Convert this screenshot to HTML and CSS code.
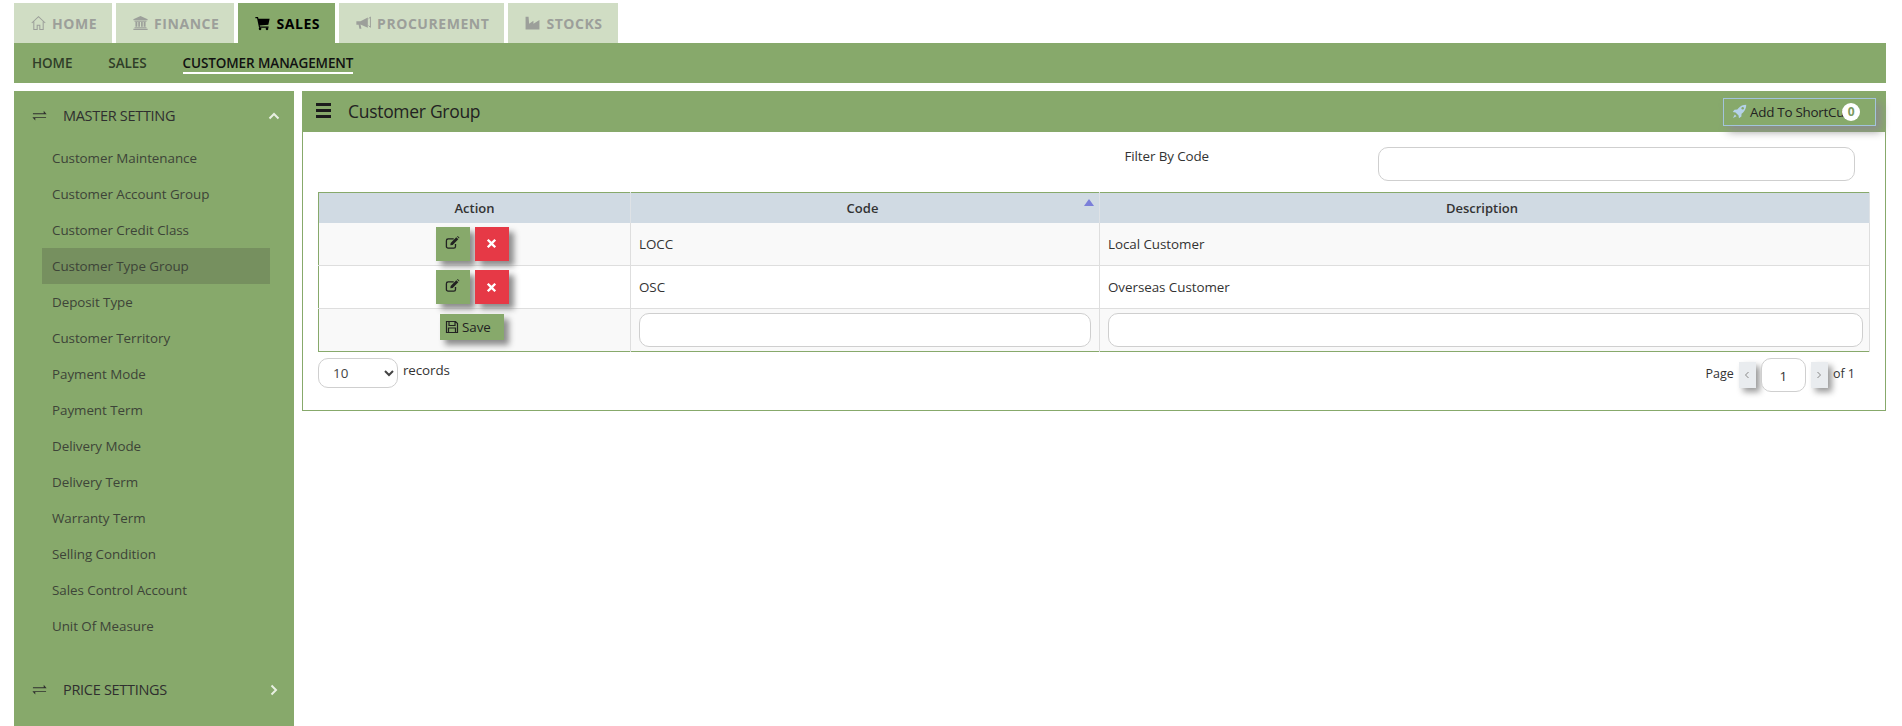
FILE: index.html
```html
<!DOCTYPE html>
<html lang="en">
<head>
<meta charset="utf-8">
<title>Customer Group</title>
<link rel="stylesheet" href="styles.css">
</head>
<body>
<svg class="defs" width="0" height="0" aria-hidden="true">
  <symbol id="ex" viewBox="0 0 16 14"><path d="M1 4h11.500V1.400L15.600 5H1zM15 9.200H3.500v2.600L.4 8.400H15z" fill="currentColor"/></symbol>
  <symbol id="edit" viewBox="0 0 16 16"><path d="M11.200 9.600v2.600a1.800 1.800 0 0 1-1.800 1.800H3.300a1.800 1.800 0 0 1-1.800-1.800V6a1.800 1.800 0 0 1 1.800-1.800h6" fill="none" stroke="currentColor" stroke-width="1.400"/><path d="M6 8.400 12 2.400 14.200 4.600 8.200 10.600 5.700 11zM12.800 1.600 13.600 1 15.400 2.800 14.900 3.700z" fill="currentColor"/></symbol>
  <symbol id="x" viewBox="0 0 12 12"><path d="M2.800 1 6 4.200 9.200 1 11 2.800 7.800 6 11 9.200 9.200 11 6 7.800 2.800 11 1 9.200 4.200 6 1 2.800z" fill="currentColor"/></symbol>
</svg>

<nav class="tabs">
  <a class="tab">
    <svg class="tab-ico" viewBox="0 0 16 16"><path d="M.8 8 8 1.200 15.200 8M3 6.400V15h3.600v-4.600h2.800V15H13V6.400" fill="none" stroke="currentColor" stroke-width="1.100"/></svg>HOME</a>
  <a class="tab">
    <svg class="tab-ico" viewBox="0 0 16 16"><path d="M8 .6 15.600 4v1H.4V4zM1.600 5.600h12.800v1H1.600zM2.600 7h2v5h-2zM5.600 7h1.800v5H5.600zM8.600 7h1.800v5H8.600zM11.400 7h2v5h-2zM1.600 12.400h12.800v1.200H1.600zM.4 14h15.200v1.400H.4z" fill="currentColor"/></svg>FINANCE</a>
  <a class="tab tab-active">
    <svg class="tab-ico" viewBox="0 0 16 16"><path d="M.4 1.600h2.800l.5 1.800H15.600l-1.400 6.400-9.200.8.300 1.200h9.200v1.300H4.300L2.200 2.900H.4z" fill="currentColor"/><circle cx="5.400" cy="14.200" r="1.400" fill="currentColor"/><circle cx="12.800" cy="14.200" r="1.400" fill="currentColor"/></svg>SALES</a>
  <a class="tab">
    <svg class="tab-ico" viewBox="0 0 16 16"><path d="M.4 6.200h4.400L12.600 2v11L4.800 9.600l1 4.400H3.600L2.800 9.800H.4z" fill="currentColor"/><path d="M13.400 3.400 15.400 1.600v11l-2-1.800" fill="none" stroke="currentColor" stroke-width="1"/></svg>PROCUREMENT</a>
  <a class="tab">
    <svg class="tab-ico" viewBox="0 0 16 16"><path d="M.6 1.400h3.200l.6 7.400L9 5.600v3.200l6.400-4V15H.6z" fill="currentColor"/></svg>STOCKS</a>
</nav>

<nav class="subnav">
  <a class="sub">HOME</a>
  <a class="sub">SALES</a>
  <a class="sub sub-active">CUSTOMER MANAGEMENT</a>
</nav>

<div class="content">
  <aside class="sidebar">
    <div class="side-head">
      <svg class="side-ico"><use href="#ex"/></svg><span class="side-title">MASTER SETTING</span>
      <svg class="chev" viewBox="0 0 12 12"><path d="M1.500 8.500 6 4l4.500 4.500" fill="none" stroke="currentColor" stroke-width="2"/></svg>
    </div>
    <ul class="side-list">
      <li class="side-item">Customer Maintenance</li>
      <li class="side-item">Customer Account Group</li>
      <li class="side-item">Customer Credit Class</li>
      <li class="side-item side-item-active">Customer Type Group</li>
      <li class="side-item">Deposit Type</li>
      <li class="side-item">Customer Territory</li>
      <li class="side-item">Payment Mode</li>
      <li class="side-item">Payment Term</li>
      <li class="side-item">Delivery Mode</li>
      <li class="side-item">Delivery Term</li>
      <li class="side-item">Warranty Term</li>
      <li class="side-item">Selling Condition</li>
      <li class="side-item">Sales Control Account</li>
      <li class="side-item">Unit Of Measure</li>
    </ul>
    <div class="side-head">
      <svg class="side-ico"><use href="#ex"/></svg><span class="side-title">PRICE SETTINGS</span>
      <svg class="chev" viewBox="0 0 12 12"><path d="M3.500 1.500 8 6l-4.500 4.500" fill="none" stroke="currentColor" stroke-width="2"/></svg>
    </div>
  </aside>

  <main class="panel">
    <header class="panel-head">
      <span class="bars"><i></i><i></i><i></i></span>
      <h1 class="panel-title">Customer Group</h1>
      <button class="shortcut">
        <svg class="rocket" viewBox="0 0 16 16"><path d="M15.200.8C11.800.8 9 2 6.800 4.400L5.600 5.800 2.600 6 .8 8.600l3 .4L7 12.200l.4 3 2.600-1.800.2-3 1.400-1.200C14 7 15.200 4.200 15.200.8z" fill="currentColor"/><circle cx="11.400" cy="4.600" r="1.300" fill="#87a96b"/><path d="M3 11.200 1 15l3.800-2z" fill="currentColor"/></svg>
        Add To ShortCut
        <span class="badge">0</span>
      </button>
    </header>
    <div class="panel-body">
      <div class="filter">
        <label class="filter-label">Filter By Code</label>
        <input class="field filter-input" type="text">
      </div>
      <table class="grid">
        <colgroup><col class="col-a"><col class="col-b"><col></colgroup>
        <thead>
          <tr><th>Action</th><th class="th-off">Code<span class="sort"></span></th><th class="th-off">Description</th></tr>
        </thead>
        <tbody>
          <tr class="odd">
            <td class="act"><span class="btn-ico btn-edit"><svg class="i14"><use href="#edit"/></svg></span><span class="btn-ico btn-del"><svg class="i10"><use href="#x"/></svg></span></td>
            <td>LOCC</td><td>Local Customer</td>
          </tr>
          <tr>
            <td class="act"><span class="btn-ico btn-edit"><svg class="i14"><use href="#edit"/></svg></span><span class="btn-ico btn-del"><svg class="i10"><use href="#x"/></svg></span></td>
            <td>OSC</td><td>Overseas Customer</td>
          </tr>
          <tr class="odd">
            <td class="act"><span class="btn-save"><svg class="save-ico" viewBox="0 0 14 14"><path d="M1.500 1.500h9l2 2v9h-11zM4 1.500v4h6v-4M3.500 12.500V8h7v4.500" fill="none" stroke="currentColor" stroke-width="1.200"/></svg>Save</span></td>
            <td class="in"><input class="field" type="text"></td>
            <td class="in in-last"><input class="field" type="text"></td>
          </tr>
        </tbody>
      </table>
      <div class="pager">
        <div class="rec">
          <select class="size"><option>10</option></select>
          <span class="rec-label">records</span>
        </div>
        <div class="pages">
          <span class="page-text">Page</span>
          <span class="page-btn"><svg viewBox="0 0 8 10" class="pg"><path d="M5.500 2 2.500 5l3 3" fill="none" stroke="currentColor"/></svg></span>
          <span class="page-num">1</span>
          <span class="page-btn"><svg viewBox="0 0 8 10" class="pg"><path d="M2.500 2l3 3-3 3" fill="none" stroke="currentColor"/></svg></span>
          <span class="page-text">of 1</span>
        </div>
      </div>
    </div>
  </main>
</div>
</body>
</html>
```
FILE: styles.css
```css
* { box-sizing: border-box; }
html, body { margin: 0; height: 726px; overflow: hidden; background: #fff; }
body { font-family: "Open Sans", "Noto Sans", sans-serif; font-size: 13.400px; color: #333; }
.defs { position: absolute; }

.tabs { display: flex; gap: 4px; padding: 3px 0 0 14px; height: 43px; }
.tab { display: flex; align-items: center; gap: 6px; height: 40px; padding: 0 15px 0 17px; background: #d0ddc4; color: #9c9f9a; font-size: 14px; font-weight: 700; letter-spacing: .55px; }
.tab-ico { width: 15px; height: 16px; flex: none; }
.tab-active { background: #87a96b; color: #000; }

.subnav { display: flex; gap: 36px; height: 40px; margin: 0 16px 0 14px; padding: 0 18px; align-items: center; background: #87a96b; }
.sub { color: #2f3d28; font-size: 13.500px; font-weight: 600; line-height: 20px; letter-spacing: -.1px; }
.sub-active { color: #111; border-bottom: 2px solid #fff; line-height: 18px; padding-top: 2px; }

.content { display: flex; gap: 8px; margin: 8px 16px 0 14px; }

.sidebar { flex: none; width: 280px; height: 640px; background: #87a96b; }
.side-head { display: flex; align-items: center; height: 49px; padding: 0 14px 0 18px; color: #2f2f2f; }
.side-ico { width: 15px; height: 14px; flex: none; }
.side-title { margin-left: 16px; font-size: 14.500px; letter-spacing: -.3px; flex: 1; }
.chev { width: 12px; height: 12px; color: #e8efe2; }
.side-list { list-style: none; margin: 0 24px 0 28px; padding: 0 0 21px; }
.side-item { height: 36px; line-height: 36px; padding-left: 10px; color: #3d4438; letter-spacing: -.05px; white-space: nowrap; }
.side-item-active { background: #76905f; }

.panel { flex: 1; min-width: 0; height: 320px; border: 1px solid #87a96b; border-top: 0; }
.panel-head { display: flex; align-items: center; height: 41px; margin: 0 -1px; padding: 0 10px 0 14px; background: #87a96b; }
.bars { display: flex; flex-direction: column; gap: 3px; width: 15px; margin-top: -3px; }
.bars i { display: block; height: 3px; background: #1c1c1c; }
.panel-title { flex: 1; margin: -1px 0 0 17px; font-size: 17.500px; font-weight: 400; color: #222; letter-spacing: -.3px; }
.shortcut { position: relative; display: flex; align-items: center; gap: 3px; width: 153px; height: 28px; padding: 0 0 0 8px; border: 1px solid #a3c4dc; background: #87a96b; box-shadow: 5px 5px 10px #8b8b8b; font: 13.400px "Open Sans", sans-serif; letter-spacing: -.25px; color: #222; white-space: nowrap; }
.rocket { width: 15px; height: 15px; color: #b5d2e8; flex: none; }
.badge { position: absolute; left: 118px; top: 4px; width: 18px; height: 18px; line-height: 18px; border-radius: 50%; background: #fff; color: #7b9a61; font-size: 12px; font-weight: 700; text-align: center; }

.panel-body { padding: 0 15px; }
.field { display: block; width: 100%; height: 34px; border: 1px solid #cfcfcf; border-radius: 10px; background: #fff; }
.filter { display: flex; justify-content: flex-end; align-items: flex-start; height: 60px; padding: 15px 15px 0 0; }
.filter-label { margin-right: 169px; line-height: 20px; color: #333; margin-top: -1px; letter-spacing: -.1px; }
.filter-input { width: 477px; }

.grid { width: 1552px; table-layout: fixed; border-collapse: collapse; border: 1px solid #87a96b; border-right: 0; }
.col-a { width: 312px; }
.col-b { width: 469px; }
.grid th { position: relative; height: 30px; padding: 0; background: #d0dae3; border-right: 1px solid #dee2e6; font-size: 13px; font-weight: 600; color: #333; text-align: center; }
.grid th.th-off { padding-right: 5px; }
.grid td { height: 43px; padding: 0 8px; border-top: 1px solid #dedede; border-right: 1px solid #dedede; color: #333; letter-spacing: -.05px; }
.grid tr.odd td { background: #f9f9f9; }
.grid tbody tr:first-child td { border-top: 0; }
.grid td.act { padding: 0 5px 0 0; text-align: center; }
.grid td.in { padding: 0 8px 0 8px; }
.grid td.in-last { padding-right: 6px; }
.sort { position: absolute; right: 5px; top: 6px; border: 5px solid transparent; border-top: 0; border-bottom: 7px solid #7b7fd9; }

.btn-ico { display: inline-flex; align-items: center; justify-content: center; width: 34px; height: 34px; vertical-align: middle; box-shadow: 5px 5px 6px #8c8c8c; }
.btn-edit { background: #87a96b; color: #222; margin-right: 5px; }
.btn-del { background: #e63946; color: #fff; }
.i14 { width: 15px; height: 15px; margin-top: -3px; }
.i10 { width: 11px; height: 11px; }
.btn-save { display: inline-flex; align-items: center; gap: 3px; width: 64px; height: 26px; padding-left: 5px; margin-top: -8px; vertical-align: middle; background: #87a96b; color: #222; box-shadow: 5px 5px 6px #8c8c8c; }
.save-ico { width: 14px; height: 14px; }

.pager { display: flex; justify-content: space-between; padding: 6px 15px 0 0; }
.rec { display: flex; align-items: flex-start; gap: 5px; }
.size { width: 80px; height: 30px; padding-left: 10px; border: 1px solid #cfcfcf; border-radius: 10px; background: #fff; color: #444; font: 13.400px "Open Sans", sans-serif; }
.rec-label { line-height: 24px; letter-spacing: -.1px; }
.pages { display: flex; align-items: flex-start; gap: 5px; }
.page-text { line-height: 24px; margin-top: 4px; font-size: 12.500px; }
.page-btn { display: flex; align-items: center; justify-content: center; width: 17px; height: 26px; margin-top: 4px; background: #e9ecef; color: #888; box-shadow: 4px 4px 6px #9a9a9a; }
.pg { width: 8px; height: 10px; }
.page-num { position: relative; width: 45px; height: 34px; line-height: 35px; text-align: center; border: 1px solid #cfcfcf; border-radius: 10px; background: #fff; }
```
